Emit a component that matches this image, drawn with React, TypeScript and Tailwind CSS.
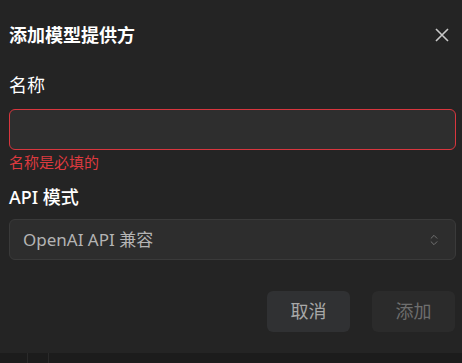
import { ChevronsUpDown } from "lucide-react";

const FONT = { fontFamily: '"Noto Sans", "Noto Sans CJK SC", sans-serif' };

export default function App() {
  return (
    <div className="w-[462px] h-[363px] overflow-hidden bg-[#1c1c1c] flex flex-col" style={FONT}>
      <div className="h-[353px] shrink-0 bg-[#242424] pl-[9px] pr-[6px] pt-[19px] flex flex-col">
        <div className="flex items-center justify-between h-[32px]">
          <h2 className="text-[18px] font-bold text-white leading-none">添加模型提供方</h2>
          <button type="button" aria-label="关闭" className="mr-[6px] text-[#c8c8c8]">
            <svg viewBox="0 0 16 16" fill="none" stroke="currentColor" strokeWidth="1.6" className="h-[16px] w-[16px]">
              <path d="M2 2l12 12M14 2L2 14" />
            </svg>
          </button>
        </div>

        <label className="mt-[22px] text-[18px] text-white leading-[24px]">名称</label>
        <input
          className="mt-[12px] h-[41px] w-full rounded-[6px] border border-[#d9363e] bg-[#2e2e2e] px-3 text-white outline-none"
          aria-invalid="true"
        />
        <p className="mt-[3px] text-[15px] leading-[18px] text-[#dc3a3f]">名称是必填的</p>

        <label className="mt-[14px] text-[18px] font-medium text-white leading-[24px]">API 模式</label>
        <div className="mt-[10px] h-[41px] w-full rounded-[6px] border border-[#3a3a3a] bg-[#2d2d2d] pl-[13px] pr-[14px] flex items-center justify-between">
          <span className="text-[17px] text-[#b4b4b4]">OpenAI API 兼容</span>
          <ChevronsUpDown className="h-[14px] w-[14px] text-[#7a7a7a]" strokeWidth={1.5} />
        </div>

        <div className="mt-[31px] flex justify-end gap-[22px] pr-[1px]">
          <button type="button" className="h-[41px] w-[83px] rounded-[6px] bg-[#303133] text-[18px] text-[#a8a8a8]">
            取消
          </button>
          <button type="button" className="h-[41px] w-[83px] rounded-[6px] bg-[#2b2b2b] text-[18px] text-[#6e6e6e]">
            添加
          </button>
        </div>
      </div>
      <div className="flex-1 flex">
        <div className="w-[28px] border-r border-[#2a2a2a]" />
        <div className="w-[21px] border-r border-[#2a2a2a]" />
      </div>
    </div>
  );
}
